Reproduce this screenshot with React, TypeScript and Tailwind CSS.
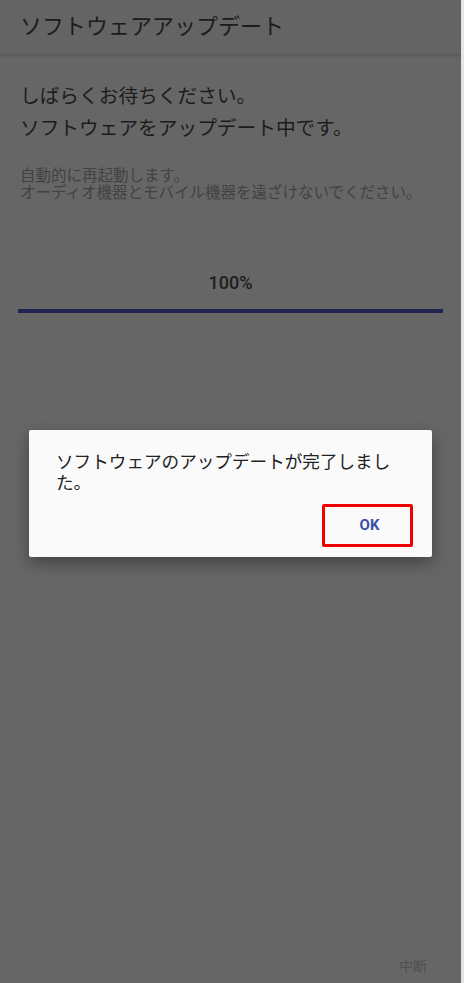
const jp = "font-['Roboto','Noto_Sans_CJK_JP',sans-serif]";

function Header() {
  return (
    <div className="h-[54px] bg-[#646464] shadow-[0_2px_3px_rgba(0,0,0,0.12)] flex items-center px-5">
      <h1 className="text-[22px] leading-none text-[#1c1c1c]">ソフトウェアアップデート</h1>
    </div>
  );
}

function CompleteDialog() {
  return (
    <div className="absolute left-[29px] top-[430px] w-[403px] h-[127px] bg-[#fafafa] rounded-[2px] shadow-[0_6px_16px_rgba(0,0,0,0.35)]">
      <p className="pl-[27px] pr-[30px] pt-[22px] text-[17.6px] leading-[21px] text-[#222]">
        ソフトウェアのアップデートが完了しました。
      </p>
      <div className="flex justify-end pr-[19px] mt-[10px]">
        <button className="w-[91px] h-[43px] border-[3px] border-[#f20000] rounded-[2px] flex items-center justify-center pl-[4px]">
          <span className="text-[15px] font-bold text-[#3f4fa8] font-['Roboto',sans-serif]">OK</span>
        </button>
      </div>
    </div>
  );
}

export default function App() {
  return (
    <div className={`relative w-[464px] h-[983px] bg-[#666666] border-r-[3px] border-[#e4e4e4] overflow-hidden flex flex-col ${jp}`}>
      <Header />
      <div className="flex-1 flex flex-col px-5">
        <div className="mt-[27px] text-[19.7px] leading-[32px] text-[#1c1c1c]">
          <p>しばらくお待ちください。</p>
          <p>ソフトウェアをアップデート中です。</p>
        </div>
        <div className="mt-[23px] text-[15.5px] leading-[17px] text-[#424242]">
          <p>自動的に再起動します。</p>
          <p>オーディオ機器とモバイル機器を遠ざけないでください。</p>
        </div>
        <div className="mt-[67px] text-center text-[18px] font-medium text-[#1e1e1e] font-['Roboto',sans-serif]">
          100%
        </div>
        <div className="mt-[13px] mr-[-2px] ml-[-2px] h-[4px] bg-[#1f2550]" />
        <div className="flex-1" />
        <div className="flex justify-end pr-[14px] pb-[6px]">
          <span className="text-[14px] text-[#505050]">中断</span>
        </div>
      </div>
      <CompleteDialog />
    </div>
  );
}
